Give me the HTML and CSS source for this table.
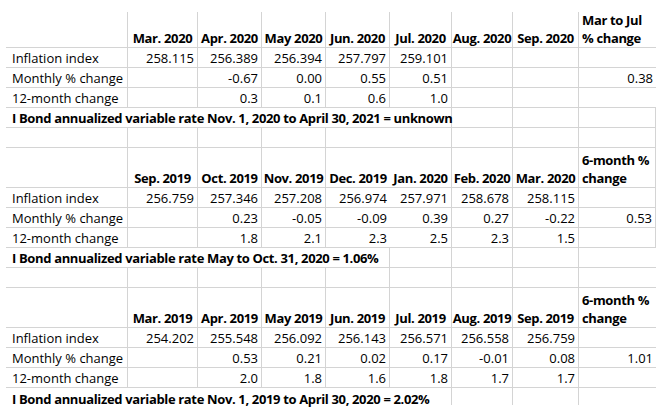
FILE: index.html
```html
<!DOCTYPE html>
<html>
<head>
<meta charset="utf-8">
<link rel="stylesheet" href="styles.css">
</head>
<body>
<div class="sheet">
  <!-- Block 1 -->
  <div class="c hd top"></div><div class="c hd top th">Mar. 2020</div><div class="c hd top th">Apr. 2020</div><div class="c hd top th">May 2020</div><div class="c hd top th">Jun. 2020</div><div class="c hd top th">Jul. 2020</div><div class="c hd top th">Aug. 2020</div><div class="c hd top th">Sep. 2020</div><div class="c hd top th wrap"><span class="l1">Mar to Jul</span><span class="l2">% change</span></div>
  <div class="c lbl">Inflation index</div><div class="c">258.115</div><div class="c">256.389</div><div class="c">256.394</div><div class="c">257.797</div><div class="c">259.101</div><div class="c"></div><div class="c"></div><div class="c"></div>
  <div class="c lbl">Monthly % change</div><div class="c"></div><div class="c">-0.67</div><div class="c">0.00</div><div class="c">0.55</div><div class="c">0.51</div><div class="c"></div><div class="c"></div><div class="c">0.38</div>
  <div class="c lbl">12-month change</div><div class="c"></div><div class="c">0.3</div><div class="c">0.1</div><div class="c">0.6</div><div class="c">1.0</div><div class="c"></div><div class="c"></div><div class="c"></div>
  <div class="c note span6">I Bond annualized variable rate Nov. 1, 2020 to April 30, 2021 = unknown</div><div class="c"></div><div class="c"></div><div class="c"></div>
  <div class="c"></div><div class="c"></div><div class="c"></div><div class="c"></div><div class="c"></div><div class="c"></div><div class="c"></div><div class="c"></div><div class="c"></div>

  <!-- Block 2 -->
  <div class="c hd"></div><div class="c hd th">Sep. 2019</div><div class="c hd th">Oct. 2019</div><div class="c hd th">Nov. 2019</div><div class="c hd th">Dec. 2019</div><div class="c hd th">Jan. 2020</div><div class="c hd th">Feb. 2020</div><div class="c hd th">Mar. 2020</div><div class="c hd th wrap"><span class="l1">6-month %</span><span class="l2">change</span></div>
  <div class="c lbl">Inflation index</div><div class="c">256.759</div><div class="c">257.346</div><div class="c">257.208</div><div class="c">256.974</div><div class="c">257.971</div><div class="c">258.678</div><div class="c">258.115</div><div class="c"></div>
  <div class="c lbl">Monthly % change</div><div class="c"></div><div class="c">0.23</div><div class="c">-0.05</div><div class="c">-0.09</div><div class="c">0.39</div><div class="c">0.27</div><div class="c">-0.22</div><div class="c">0.53</div>
  <div class="c lbl">12-month change</div><div class="c"></div><div class="c">1.8</div><div class="c">2.1</div><div class="c">2.3</div><div class="c">2.5</div><div class="c">2.3</div><div class="c">1.5</div><div class="c"></div>
  <div class="c note span5">I Bond annualized variable rate May to Oct. 31, 2020 = 1.06%</div><div class="c"></div><div class="c"></div><div class="c"></div><div class="c"></div>
  <div class="c"></div><div class="c"></div><div class="c"></div><div class="c"></div><div class="c"></div><div class="c"></div><div class="c"></div><div class="c"></div><div class="c"></div>

  <!-- Block 3 -->
  <div class="c hd"></div><div class="c hd th">Mar. 2019</div><div class="c hd th">Apr. 2019</div><div class="c hd th">May 2019</div><div class="c hd th">Jun. 2019</div><div class="c hd th">Jul. 2019</div><div class="c hd th">Aug. 2019</div><div class="c hd th">Sep. 2019</div><div class="c hd th wrap"><span class="l1">6-month %</span><span class="l2">change</span></div>
  <div class="c lbl">Inflation index</div><div class="c">254.202</div><div class="c">255.548</div><div class="c">256.092</div><div class="c">256.143</div><div class="c">256.571</div><div class="c">256.558</div><div class="c">256.759</div><div class="c"></div>
  <div class="c lbl">Monthly % change</div><div class="c"></div><div class="c">0.53</div><div class="c">0.21</div><div class="c">0.02</div><div class="c">0.17</div><div class="c">-0.01</div><div class="c">0.08</div><div class="c">1.01</div>
  <div class="c lbl">12-month change</div><div class="c"></div><div class="c">2.0</div><div class="c">1.8</div><div class="c">1.6</div><div class="c">1.8</div><div class="c">1.7</div><div class="c">1.7</div><div class="c"></div>
  <div class="c note span6 last">I Bond annualized variable rate Nov. 1, 2019 to April 30, 2020 = 2.02%</div><div class="c last"></div><div class="c last"></div><div class="c last end"></div>
</div>
</body>
</html>
```
FILE: styles.css
```css
html, body {
  margin: 0;
  padding: 0;
  background: #ffffff;
}

.sheet {
  display: grid;
  grid-template-columns: 122px 70px 64px 64px 64px 62px 61px 66px 77px;
  grid-auto-rows: auto;
  margin: 12px 0 0 6px;
  width: 650px;
  font-family: "Open Sans", "Noto Sans", sans-serif;
  font-size: 13px;
  color: #000;
}

.c {
  box-sizing: border-box;
  height: 20px;
  padding: 0 3px;
  border-right: 1px solid #d4d4d4;
  border-bottom: 1px solid #d4d4d4;
  display: flex;
  flex-direction: column;
  justify-content: flex-end;
  align-items: flex-end;
  line-height: 17px;
  white-space: nowrap;
  overflow: visible;
}

.c:nth-child(9n) {
  border-right: none;
}

.hd {
  height: 40px;
}

.hd.top {
  height: 36px;
}

.th {
  font-weight: 700;
  letter-spacing: -0.35px;
  align-items: center;
  padding: 0;
}

.th.wrap {
  align-items: flex-start;
  padding-left: 3px;
}

.l1 {
  display: block;
  line-height: 20px;
}

.l2 {
  display: block;
  line-height: 17px;
}

.lbl {
  align-items: flex-start;
  padding-left: 6px;
}

.note {
  align-items: flex-start;
  padding-left: 6px;
  font-weight: 700;
  letter-spacing: -0.35px;
}

.span6 {
  grid-column: span 6;
}

.span5 {
  grid-column: span 5;
}

.last {
  border-right: none;
  border-bottom: none;
  background: linear-gradient(#d4d4d4, #d4d4d4) right top / 1px 17px no-repeat;
}

.last.end {
  background: none;
}
```
